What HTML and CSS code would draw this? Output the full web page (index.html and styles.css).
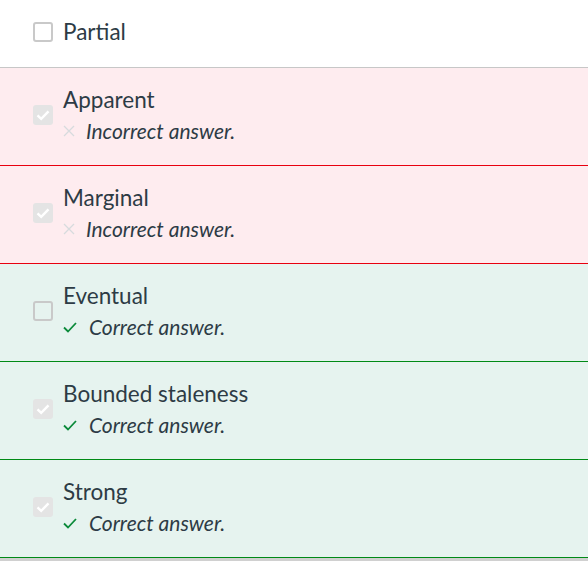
FILE: index.html
```html
<!DOCTYPE html>
<html lang="en">
<head>
    <meta charset="UTF-8">
    <meta name="viewport" content="width=device-width, initial-scale=1.0">
    <title>Quiz answers</title>
    <link rel="stylesheet" href="styles.css">
</head>
<body>
    <div class="answers">
        <div class="answer">
            <span class="box"></span>
            <div class="text">
                <div class="label">Partial</div>
            </div>
        </div>
        <div class="answer wrong">
            <span class="box checked"><svg viewBox="0 0 20 20"><path d="M4.5 10.3l3.7 3.6 7.3-7.6"/></svg></span>
            <div class="text">
                <div class="label">Apparent</div>
                <div class="feedback"><svg class="x-icon" viewBox="0 0 12 12"><path d="M1 1l10 10M11 1L1 11"/></svg>Incorrect answer.</div>
            </div>
        </div>
        <div class="answer wrong">
            <span class="box checked"><svg viewBox="0 0 20 20"><path d="M4.5 10.3l3.7 3.6 7.3-7.6"/></svg></span>
            <div class="text">
                <div class="label">Marginal</div>
                <div class="feedback"><svg class="x-icon" viewBox="0 0 12 12"><path d="M1 1l10 10M11 1L1 11"/></svg>Incorrect answer.</div>
            </div>
        </div>
        <div class="answer right">
            <span class="box"></span>
            <div class="text">
                <div class="label">Eventual</div>
                <div class="feedback"><svg class="ok-icon" viewBox="0 0 14 12"><path d="M1 6.5l4 4L13 2"/></svg>Correct answer.</div>
            </div>
        </div>
        <div class="answer right">
            <span class="box checked"><svg viewBox="0 0 20 20"><path d="M4.5 10.3l3.7 3.6 7.3-7.6"/></svg></span>
            <div class="text">
                <div class="label">Bounded staleness</div>
                <div class="feedback"><svg class="ok-icon" viewBox="0 0 14 12"><path d="M1 6.5l4 4L13 2"/></svg>Correct answer.</div>
            </div>
        </div>
        <div class="answer right">
            <span class="box checked"><svg viewBox="0 0 20 20"><path d="M4.5 10.3l3.7 3.6 7.3-7.6"/></svg></span>
            <div class="text">
                <div class="label">Strong</div>
                <div class="feedback"><svg class="ok-icon" viewBox="0 0 14 12"><path d="M1 6.5l4 4L13 2"/></svg>Correct answer.</div>
            </div>
        </div>
    </div>
</body>
</html>
```

FILE: styles.css
```css
body {
    margin: 0;
    background: #fff;
    font-family: Lato, "Open Sans", sans-serif;
    color: #2d3b45;
}
.answers {
    border-bottom: 3px solid #d0d0d0;
}
.answer {
    display: flex;
    align-items: center;
    gap: 10px;
    padding: 16px 0 19px 33px;
    border-bottom: 1px solid #c7c7c7;
}
.answer.wrong {
    background: #feecef;
    border-bottom-color: #e8000f;
}
.answer.right {
    background: #e6f3ef;
    border-bottom-color: #008a16;
}
.box {
    width: 20px;
    height: 20px;
    box-sizing: border-box;
    border: 2px solid #c9c9c9;
    border-radius: 3px;
    background: #fff;
    flex: none;
}
.right .box {
    background: transparent;
}
.box.checked {
    background: #e4e4e4;
    border: none;
}
.box svg {
    display: block;
    width: 20px;
    height: 20px;
    fill: none;
    stroke: #fff;
    stroke-width: 2.4;
}
.label {
    font-size: 22.5px;
    line-height: 32px;
}
.feedback {
    font-size: 21px;
    line-height: 30px;
    font-style: italic;
    display: flex;
    align-items: center;
}
.x-icon {
    width: 12px;
    height: 12px;
    margin-right: 11px;
    fill: none;
    stroke: #d7dbdd;
    stroke-width: 1.3;
}
.ok-icon {
    width: 14px;
    height: 12px;
    margin-right: 12px;
    fill: none;
    stroke: #0b8a3a;
    stroke-width: 1.8;
}
```
